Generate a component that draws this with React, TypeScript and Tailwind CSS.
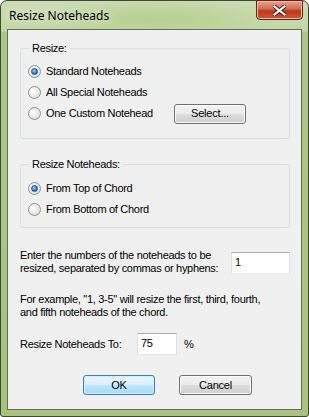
import React from "react";

const font = { fontFamily: '"Liberation Sans", Arial, sans-serif' };

function Radio({ checked, label, className = "" }: { checked?: boolean; label: string; className?: string }) {
  return (
    <div className={`flex items-center h-[21px] gap-[5px] ${className}`}>
      <span className="flex size-[13px] shrink-0 items-center justify-center rounded-full border border-[#8e8f8f] bg-[radial-gradient(circle_at_35%_35%,#ffffff,#d6d6d6)]">
        {checked && (
          <span className="size-[7px] rounded-full border border-[#1b4f8a] bg-[radial-gradient(circle_at_40%_35%,#9fd6f8,#2a7ac4_60%,#164f93)]" />
        )}
      </span>
      <span>{label}</span>
    </div>
  );
}

function Button({ children, primary, className = "" }: { children: React.ReactNode; primary?: boolean; className?: string }) {
  return (
    <button
      className={`h-[20px] rounded-[3px] border text-[11px] tracking-[-0.2px] text-black ${
        primary
          ? "border-[#3c7fb1] bg-[linear-gradient(#eaf6fd_0%,#d9f0fc_50%,#bee6fd_50%,#a7d9f5_100%)] shadow-[inset_0_0_0_1px_#c8f0fd]"
          : "border-[#707070] bg-[linear-gradient(#f2f2f2_0%,#ebebeb_50%,#dddddd_50%,#cfcfcf_100%)] shadow-[inset_0_0_0_1px_#fcfcfc]"
      } ${className}`}
      style={font}
    >
      {children}
    </button>
  );
}

function Group({ title, children, className = "" }: { title: string; children: React.ReactNode; className?: string }) {
  return (
    <div className={`relative ml-[12px] mr-[11px] rounded-[3px] border border-[#d5dfe5] ${className}`}>
      <span className="absolute -top-[8px] left-[8px] bg-[#f0f0f0] px-[3px] leading-[14px]">{title}</span>
      {children}
    </div>
  );
}

function TextBox({ value, className = "" }: { value: string; className?: string }) {
  return (
    <div className={`h-[22px] shrink-0 border border-[#abadb3] border-b-[#e3e9ef] border-x-[#dbdfe6] bg-white pl-[3px] pt-[2px] leading-[14px] ${className}`}>
      {value}
    </div>
  );
}

export default function App() {
  return (
    <div className="w-[309px] h-[417px] flex flex-col rounded-t-[7px] rounded-b-[3px] border border-[#3d4a35] bg-[linear-gradient(180deg,#cddcb6_0px,#c3d6a5_30px,#aec58a_31px,#a9c27f_100%)] px-[6px] pb-[6px]">
      {/* Title bar */}
      <div className="relative h-[28px] shrink-0 flex items-center pl-[2px] bg-[radial-gradient(ellipse_120px_22px_at_150px_18px,#b7d08f,transparent)]">
        <span
          className="text-[12px] text-black pt-[2px]"
          style={{ fontFamily: '"Noto Sans", "Open Sans", sans-serif', textShadow: "0 0 8px #f2f7ea" }}
        >
          Resize Noteheads
        </span>
        <div className="absolute -top-[1px] right-[-1px] h-[20px] w-[47px] rounded-b-[4px] border border-[#5e2415] bg-[linear-gradient(#e8a493_0%,#d0684d_45%,#b8391b_55%,#d2553a_100%)] shadow-[inset_0_0_0_1px_#efb9a6] flex items-center justify-center">
          <svg width="13" height="11" viewBox="0 0 13 11">
            <path d="M1.5 1.5 L11.5 9.5 M11.5 1.5 L1.5 9.5" stroke="#3b1a12" strokeWidth="4" strokeLinecap="square" />
            <path d="M1.5 1.5 L11.5 9.5 M11.5 1.5 L1.5 9.5" stroke="#ffffff" strokeWidth="2.2" strokeLinecap="square" />
          </svg>
        </div>
      </div>

      {/* Client area */}
      <div className="flex-1 flex flex-col border border-[#5f6e55] bg-[#f0f0f0] text-[11px] tracking-[-0.3px] text-black" style={font}>
        <Group title="Resize:" className="mt-[18px] pt-[12px] pb-[14px] pl-[7px]">
          <Radio checked label="Standard Noteheads" />
          <Radio label="All Special Noteheads" />
          <div className="flex items-center">
            <Radio label="One Custom Notehead" className="w-[146px]" />
            <Button className="w-[72px]">Select...</Button>
          </div>
        </Group>

        <Group title="Resize Noteheads:" className="mt-[25px] pt-[13px] pb-[7px] pl-[7px]">
          <Radio checked label="From Top of Chord" />
          <Radio label="From Bottom of Chord" />
        </Group>

        <div className="mt-[21px] ml-[12px] mr-[11px] flex items-start justify-between leading-[13px]">
          <p>
            Enter the numbers of the noteheads to be
            <br />
            resized, separated by commas or hyphens:
          </p>
          <TextBox value="1" className="mt-[3px] w-[59px]" />
        </div>

        <p className="mt-[18px] ml-[12px] leading-[13px]">
          For example, "1, 3-5" will resize the first, third, fourth,
          <br />
          and fifth noteheads of the chord.
        </p>

        <div className="mt-[14px] ml-[12px] flex items-center h-[22px]">
          <span className="w-[117px]">Resize Noteheads To:</span>
          <TextBox value="75" className="w-[40px]" />
          <span className="ml-[7px]">%</span>
        </div>

        <div className="mt-[20px] ml-[75px] flex gap-[24px]">
          <Button primary className="w-[72px]">OK</Button>
          <Button className="w-[73px]">Cancel</Button>
        </div>
      </div>
    </div>
  );
}
